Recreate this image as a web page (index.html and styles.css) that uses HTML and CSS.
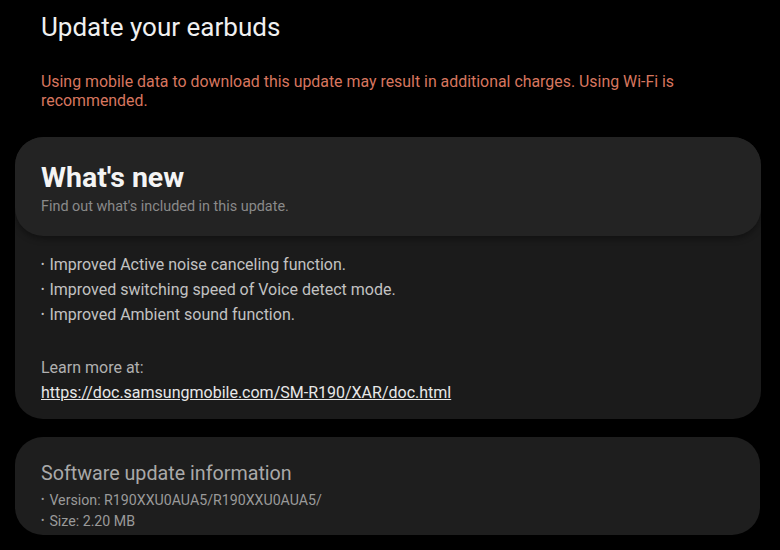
FILE: index.html
```html
<!DOCTYPE html>
<html lang="en">
<head>
  <meta charset="UTF-8">
  <meta name="viewport" content="width=device-width, initial-scale=1.0">
  <title>Update your earbuds</title>
  <link rel="stylesheet" href="styles.css">
</head>
<body>

<h1 class="page-title">Update your earbuds</h1>
<p class="warning">Using mobile data to download this update may result in additional charges. Using Wi-Fi is recommended.</p>

<div class="card">
  <div class="card-head">
    <h2>What's new</h2>
    <p class="sub">Find out what's included in this update.</p>
  </div>
  <div class="card-body">
    <ul class="changes">
      <li>Improved Active noise canceling function.</li>
      <li>Improved switching speed of Voice detect mode.</li>
      <li>Improved Ambient sound function.</li>
    </ul>
    <p class="learn">Learn more at:</p>
    <a class="link" href="#">https://doc.samsungmobile.com/SM-R190/XAR/doc.html</a>
  </div>
</div>

<div class="card info">
  <h3>Software update information</h3>
  <ul class="details">
    <li>Version: R190XXU0AUA5/R190XXU0AUA5/</li>
    <li>Size: 2.20 MB</li>
  </ul>
</div>

</body>
</html>
```
FILE: styles.css
```css
body {
  margin: 0;
  background-color: #000;
  font-family: Roboto, "Liberation Sans", sans-serif;
  color: #ddd;
}
.page-title {
  margin: 12px 0 0 41px;
  font-size: 26px;
  line-height: 30px;
  font-weight: 400;
  color: #f0f0f0;
}
.warning {
  margin: 30px 90px 0 41px;
  font-size: 15.9px;
  line-height: 19px;
  color: #d7765f;
}
.card {
  margin: 27px 0 0 15px;
  width: 746px;
  border-radius: 28px;
  background-color: #1b1b1b;
  overflow: hidden;
}
.card-head {
  padding: 25px 26px 20px;
  background-color: #232323;
  border-radius: 28px;
  box-shadow: 0 3px 6px rgba(0, 0, 0, 0.35);
}
.card-head h2 {
  margin: 0;
  font-size: 28.5px;
  line-height: 32px;
  font-weight: 700;
  color: #f4f4f4;
}
.card-head .sub {
  margin: 4px 0 0;
  font-size: 14.4px;
  line-height: 18px;
  color: #8a8a8a;
}
.card-body {
  padding: 16px 26px 13.5px;
}
.changes, .details {
  list-style: none;
  margin: 0;
  padding: 0;
}
.changes li {
  font-size: 16px;
  line-height: 25px;
  color: #c2c2c2;
}
.changes li::before, .details li::before {
  content: "\2022";
  font-size: 10px;
  line-height: 1;
  margin-right: 5px;
  vertical-align: 2px;
}
.learn {
  margin: 28px 0 0;
  font-size: 16px;
  line-height: 25px;
  color: #b0b0b0;
}
.link {
  display: block;
  font-size: 16px;
  line-height: 25px;
  color: #e8e8e8;
  text-decoration: underline;
}
.info {
  margin-top: 18px;
  width: 745px;
  padding: 25px 26px 3px;
  box-sizing: border-box;
  background-color: #1e1e1e;
}
.info h3 {
  margin: 0;
  font-size: 19.7px;
  line-height: 24px;
  font-weight: 400;
  color: #a9a9a9;
}
.details {
  margin-top: 4.5px;
}
.details li {
  font-size: 14.2px;
  line-height: 21px;
  color: #9a9a9a;
}
```
